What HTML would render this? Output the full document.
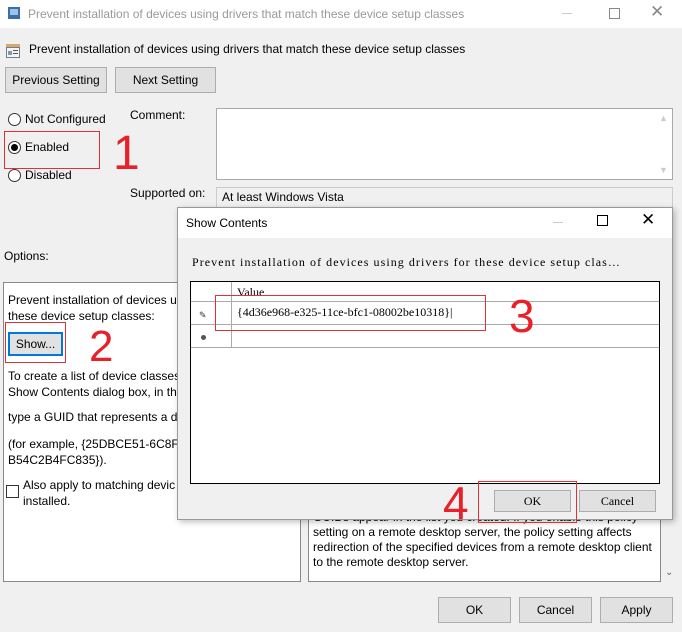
<!DOCTYPE html>
<html><head><meta charset="utf-8"><style>
*{margin:0;padding:0;box-sizing:border-box}
body{width:682px;height:632px;background:#f0f0f0;font-family:"Liberation Sans",sans-serif;font-size:12px;color:#000;position:relative;overflow:hidden}
.a{position:absolute;white-space:nowrap}
.btn{position:absolute;background:#e1e1e1;border:1px solid #adadad;text-align:center;font-size:12px}
.red{position:absolute;border:1px solid #e0313a}
.num{position:absolute;color:#e8202a;font-family:"Liberation Sans",sans-serif;line-height:1}
.radio{position:absolute;width:13px;height:13px;border:1px solid #333;border-radius:50%;background:#fff}
.mono{font-family:"Liberation Serif","Noto Serif CJK SC",serif}
</style></head><body>
<div class="a" style="left:0;top:0;width:682px;height:28px;background:#fff"></div>
<svg class="a" style="left:7px;top:6px" width="14" height="14"><rect x="1" y="1" width="12" height="12" fill="#3b6ea5"/><rect x="3" y="3" width="8" height="6" fill="#9cc3ea"/></svg>
<div class="a" style="left:28px;top:7px;color:#999;font-size:12px">Prevent installation of devices using drivers that match these device setup classes</div>
<div class="a" style="left:562px;top:13px;width:10px;height:1px;background:#ccc"></div>
<div class="a" style="left:609px;top:8px;width:11px;height:11px;border:1px solid #888"></div>
<div class="a" style="left:650px;top:2px;font-size:17px;color:#888">✕</div>

<svg class="a" style="left:5px;top:43px" width="16" height="16"><rect x="1" y="1" width="14" height="14" fill="#6b7f95"/><rect x="2" y="5" width="12" height="9" fill="#f4f4f4"/><rect x="3" y="8" width="4" height="4" fill="#7f98b3"/><rect x="8" y="7" width="5" height="1" fill="#555"/><rect x="8" y="10" width="5" height="1" fill="#555"/><rect x="1" y="1" width="14" height="3" fill="#d8a86a"/></svg>
<div class="a" style="left:29px;top:42px">Prevent installation of devices using drivers that match these device setup classes</div>
<div class="btn" style="left:5px;top:67px;width:102px;height:26px;line-height:24px">Previous Setting</div>
<div class="btn" style="left:115px;top:67px;width:101px;height:26px;line-height:24px">Next Setting</div>

<div class="radio" style="left:8px;top:113px"></div><div class="a" style="left:25px;top:112px">Not Configured</div>
<div class="radio" style="left:8px;top:141px"></div><div class="a" style="left:11px;top:144px;width:7px;height:7px;border-radius:50%;background:#000"></div><div class="a" style="left:25px;top:140px">Enabled</div>
<div class="radio" style="left:8px;top:169px"></div><div class="a" style="left:25px;top:168px">Disabled</div>
<div class="red" style="left:4px;top:131px;width:96px;height:38px"></div>
<div class="num" style="left:113px;top:130px;font-size:48px">1</div>

<div class="a" style="left:130px;top:108px">Comment:</div>
<div class="a" style="left:216px;top:108px;width:457px;height:72px;background:#fff;border:1px solid #aaa"></div>
<div class="a" style="left:659px;top:113px;color:#ccc;font-size:9px">▲</div>
<div class="a" style="left:659px;top:165px;color:#ccc;font-size:9px">▼</div>
<div class="a" style="left:130px;top:186px">Supported on:</div>
<div class="a" style="left:216px;top:187px;width:457px;height:30px;background:#f0f0f0;border:1px solid #ccc"></div>
<div class="a" style="left:222px;top:190px">At least Windows Vista</div>
<div class="a" style="left:4px;top:249px">Options:</div>

<div class="a" style="left:3px;top:282px;width:298px;height:300px;background:#fff;border:1px solid #888"></div>
<div class="a" style="left:8px;top:292px;line-height:16px">Prevent installation of devices us<br>these device setup classes:</div>
<div class="a" style="left:8px;top:332px;width:55px;height:24px;background:#e1e1e1;border:2px solid #0078d7;text-align:center;line-height:20px">Show...</div>
<div class="red" style="left:5px;top:322px;width:61px;height:41px"></div>
<div class="num" style="left:89px;top:325px;font-size:44px">2</div>
<div class="a" style="left:8px;top:368px;line-height:16px">To create a list of device classes,<br>Show Contents dialog box, in th</div>
<div class="a" style="left:8px;top:410px">type a GUID that represents a de</div>
<div class="a" style="left:8px;top:436px;line-height:16px">(for example, {25DBCE51-6C8F-<br>B54C2B4FC835}).</div>
<div class="a" style="left:6px;top:485px;width:13px;height:13px;border:1px solid #333;background:#fff"></div>
<div class="a" style="left:23px;top:477px;line-height:16px">Also apply to matching devic<br>installed.</div>

<div class="a" style="left:308px;top:495px;width:353px;height:87px;background:#fff;border:1px solid #888"></div>
<div class="a" style="left:313px;top:510px;line-height:15px">GUIDs appear in the list you created. If you enable this policy<br>setting on a remote desktop server, the policy setting affects<br>redirection of the specified devices from a remote desktop client<br>to the remote desktop server.</div>
<div class="a" style="left:665px;top:567px;color:#666;font-size:10px">⌄</div>

<div class="btn" style="left:438px;top:597px;width:73px;height:26px;line-height:24px">OK</div>
<div class="btn" style="left:519px;top:597px;width:73px;height:26px;line-height:24px">Cancel</div>
<div class="btn" style="left:600px;top:597px;width:73px;height:26px;line-height:24px">Apply</div>

<!-- dialog -->
<div class="a" style="left:177px;top:207px;width:496px;height:313px;background:#f0f0f0;border:1px solid #999;box-shadow:2px 2px 6px rgba(0,0,0,.25)"></div>
<div class="a" style="left:178px;top:208px;width:494px;height:30px;background:#fff"></div>
<div class="a" style="left:186px;top:216px">Show Contents</div>
<div class="a" style="left:553px;top:222px;width:10px;height:1px;background:#ccc"></div>
<div class="a" style="left:597px;top:215px;width:11px;height:11px;border:1px solid #000"></div>
<div class="a" style="left:641px;top:210px;font-size:17px">✕</div>
<div class="a mono" style="left:192px;top:255px;font-size:12px;letter-spacing:1.05px">Prevent installation of devices using drivers for these device setup clas…</div>
<div class="a" style="left:190px;top:281px;width:470px;height:203px;background:#fff;border:1px solid #000"></div>
<div class="a" style="left:191px;top:301px;width:468px;height:1px;background:#aaa"></div>
<div class="a" style="left:191px;top:324px;width:468px;height:1px;background:#aaa"></div>
<div class="a" style="left:191px;top:347px;width:468px;height:1px;background:#aaa"></div>
<div class="a" style="left:231px;top:282px;width:1px;height:66px;background:#aaa"></div>
<div class="a mono" style="left:237px;top:285px;font-size:12px">Value</div>
<div class="a" style="left:199px;top:310px;font-size:9px;color:#333">✎</div>
<div class="a" style="left:201px;top:335px;width:5px;height:5px;border-radius:50%;background:#555"></div>
<div class="a mono" style="left:237px;top:305px;font-size:12px">{4d36e968-e325-11ce-bfc1-08002be10318}|</div>
<div class="red" style="left:215px;top:295px;width:271px;height:36px"></div>
<div class="num" style="left:509px;top:293px;font-size:46px">3</div>
<div class="btn mono" style="left:494px;top:490px;width:77px;height:22px;line-height:20px">OK</div>
<div class="btn mono" style="left:579px;top:490px;width:77px;height:22px;line-height:20px">Cancel</div>
<div class="red" style="left:478px;top:481px;width:99px;height:42px"></div>
<div class="num" style="left:443px;top:480px;font-size:46px">4</div>
</body></html>
